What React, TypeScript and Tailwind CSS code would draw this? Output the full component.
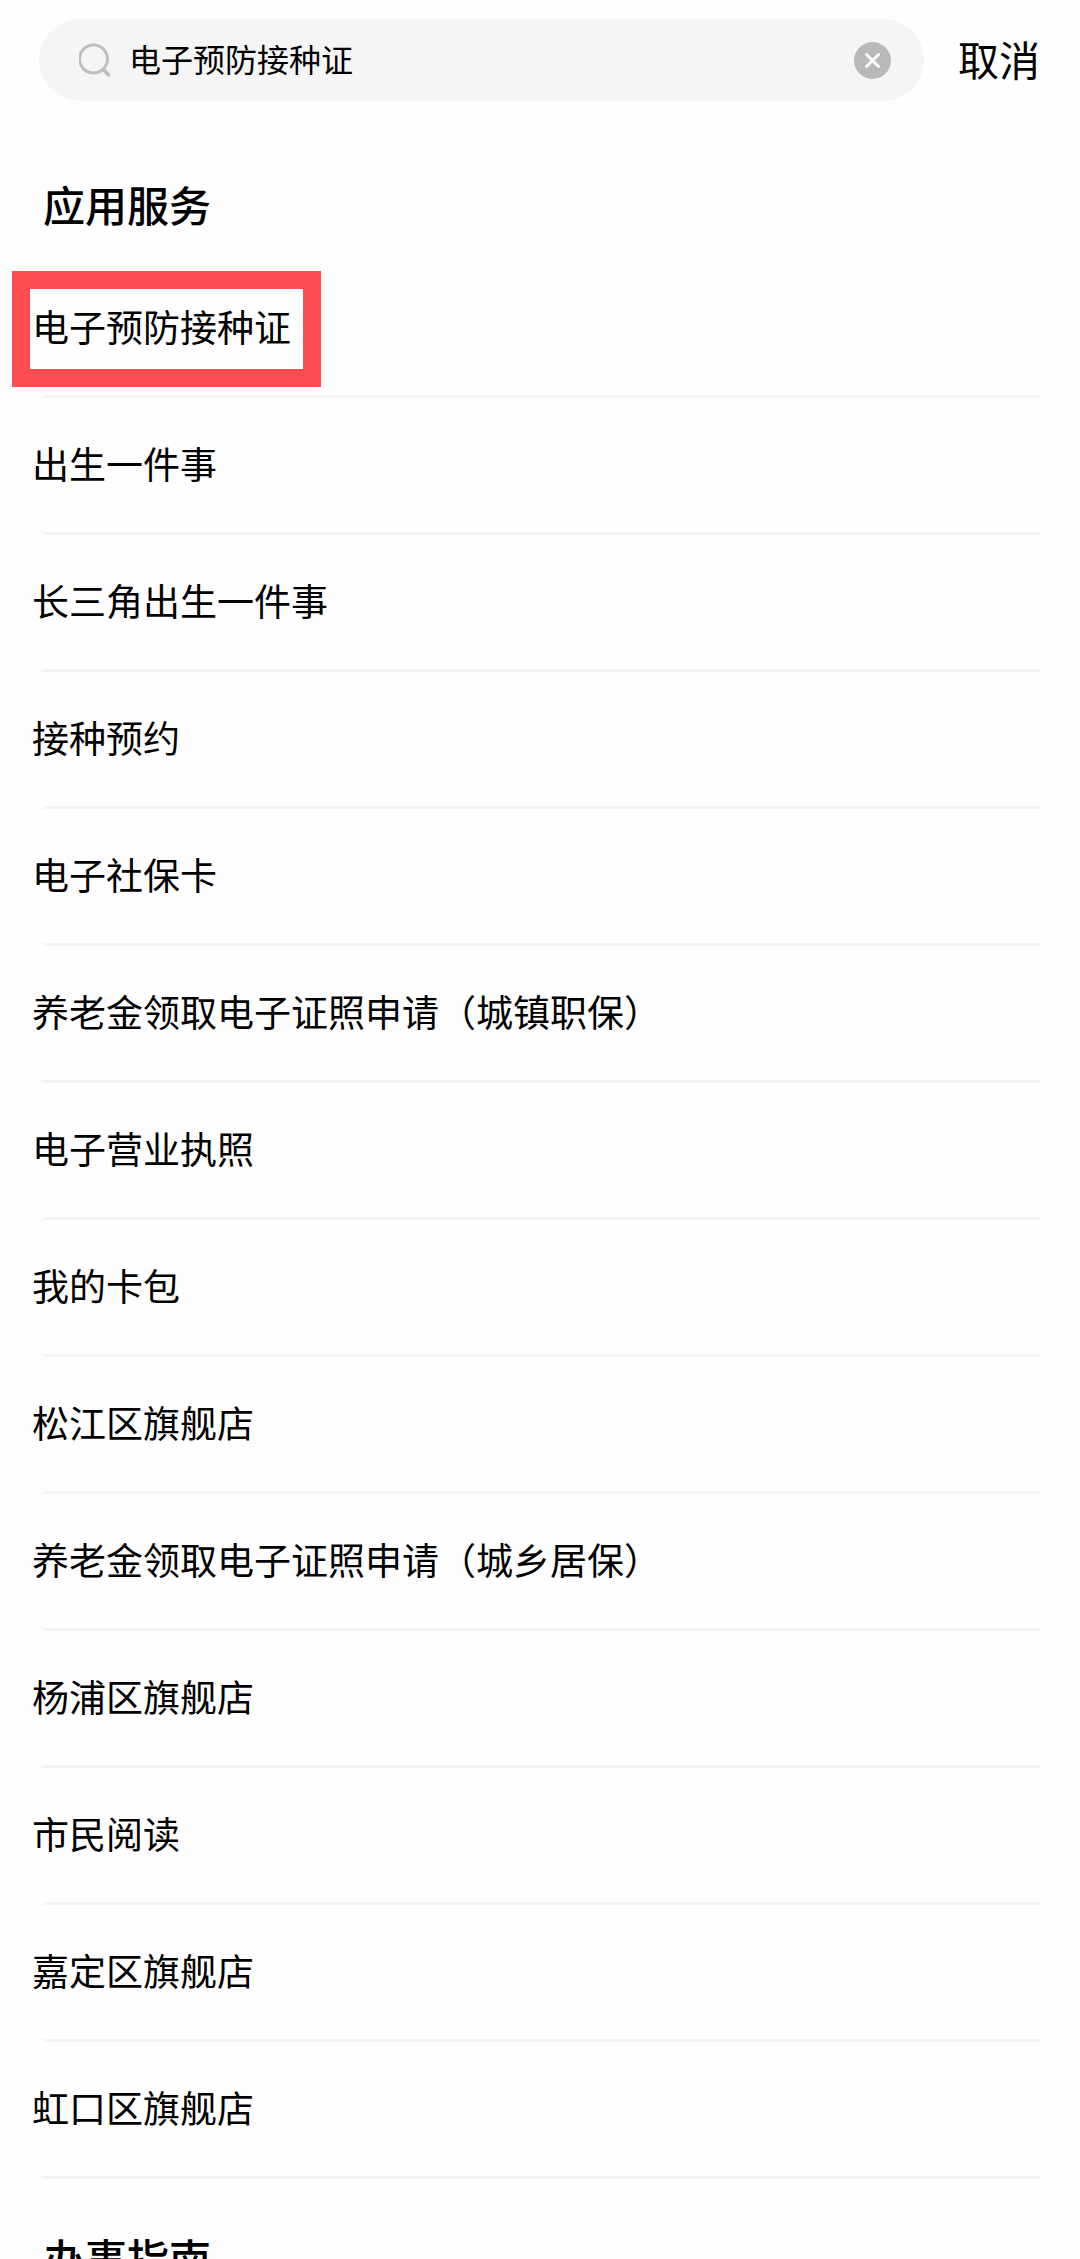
import { useState } from "react";

const services = [
  "电子预防接种证",
  "出生一件事",
  "长三角出生一件事",
  "接种预约",
  "电子社保卡",
  "养老金领取电子证照申请（城镇职保）",
  "电子营业执照",
  "我的卡包",
  "松江区旗舰店",
  "养老金领取电子证照申请（城乡居保）",
  "杨浦区旗舰店",
  "市民阅读",
  "嘉定区旗舰店",
  "虹口区旗舰店",
];

const SearchBar = () => {
  const [keyword, setKeyword] = useState("电子预防接种证");

  return (
    <header className="flex items-center pl-[39px] pr-10 pt-[19px] pb-[25px]">
      <div className="flex h-[82px] flex-1 items-center rounded-full bg-[#f5f5f5] pl-10 pr-[33px]">
        <svg
          className="mr-4 shrink-0"
          width="34"
          height="36"
          viewBox="0 0 34 36"
          fill="none"
          stroke="#bfbfbf"
          strokeWidth="3"
        >
          <circle cx="14.5" cy="17" r="14" />
          <path d="M24 27L30.5 34" strokeWidth="3.5" />
        </svg>
        <input
          type="text"
          aria-label="搜索"
          value={keyword}
          onChange={(e) => setKeyword(e.target.value)}
          className="min-w-0 flex-1 bg-transparent pb-1 text-[32px] leading-[48px] text-black outline-none"
        />
        <button type="button" aria-label="清除" onClick={() => setKeyword("")}>
          <svg width="37" height="37" viewBox="0 0 37 37" fill="none">
            <circle cx="18.5" cy="18.5" r="18.5" fill="#b9b9b9" />
            <path
              d="M12.5 12.5L24.5 24.5M24.5 12.5L12.5 24.5"
              stroke="#fafafa"
              strokeWidth="3"
              strokeLinecap="round"
            />
          </svg>
        </button>
      </div>
      <button type="button" className="ml-[34px] pb-1 text-[41px] leading-[60px]">
        取消
      </button>
    </header>
  );
};

const App = () => {
  return (
    <main className="h-screen overflow-hidden bg-[#fefefe] font-['Noto_Sans_CJK_SC',sans-serif] text-black">
      <SearchBar />

      <section className="pl-[43px] pr-10">
        <h2 className="pt-12 pb-[27px] text-[42px] leading-[60px] font-medium">
          应用服务
        </h2>
        <ul>
          {services.map((name, index) => (
            <li
              key={name}
              className="relative flex h-[137px] items-center border-b-3 border-[#f4f4f4] pb-1"
            >
              <a href="#" className="-ml-[11px] text-[37px] leading-[56px]">
                {name}
              </a>
              {index === 0 && (
                <span className="pointer-events-none absolute top-[10px] -left-[31px] h-[116px] w-[309px] border-18 border-[#fd4d50]" />
              )}
            </li>
          ))}
        </ul>
      </section>

      <section className="pl-[43px] pr-10">
        <h2 className="pt-12 pb-[27px] text-[42px] leading-[60px] font-medium">
          办事指南
        </h2>
      </section>
    </main>
  );
};

export default App;
